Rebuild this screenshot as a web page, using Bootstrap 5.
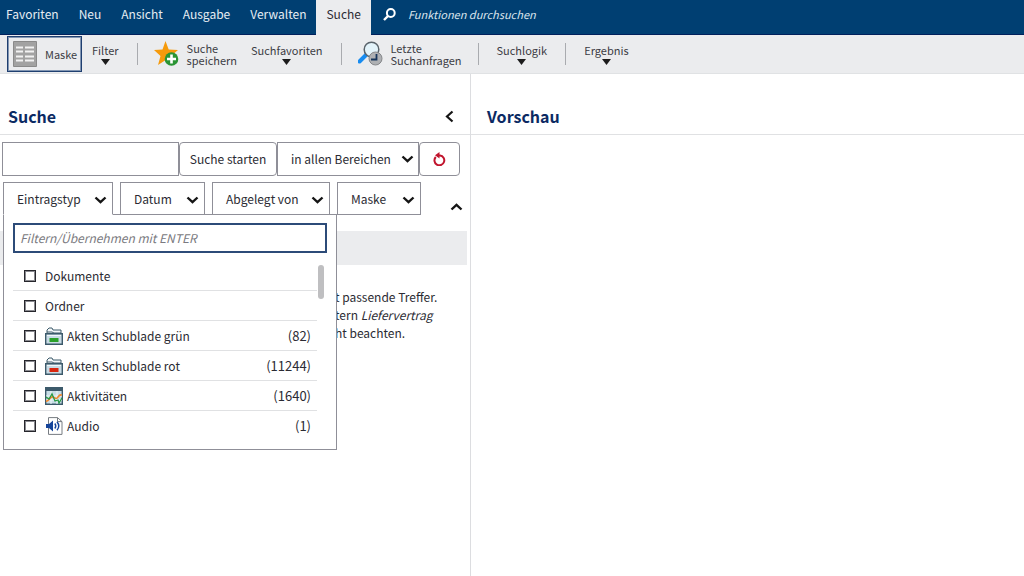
<!DOCTYPE html>
<html lang="de">
<head>
<meta charset="utf-8">
<meta name="viewport" content="width=device-width, initial-scale=1">
<title>Suche</title>
<link rel="stylesheet" href="https://cdn.jsdelivr.net/npm/bootstrap@5.3.0/dist/css/bootstrap.min.css">
<style>
  :root { --navy: #003f72; --ink: #2b2b33; --edge: #8f8f98; --panel: #ebecee; --title: #0b2a63; }
  body { font-family: "Noto Sans CJK SC", "Noto Sans", sans-serif; font-size: 12px; line-height: 18px; color: var(--ink); background: #fff; }
  .topbar { background: var(--navy); height: 35px; border-bottom: 1px solid #00205c; }
  .topbar .nav-link { color: #e6edf3; padding: 5px 10px; height: 35px; }
  .topbar .nav-link.active { color: var(--ink); background: var(--panel); }
  .topbar .nav-item:first-child .nav-link { padding-left: 6px; }
  .topbar label { margin-left: 12px; }
  .cmd-search { background: none; border: 0; color: #fff; font-size: 11px; font-style: italic; padding: 0; width: 200px; height: 28px; outline: 0; }
  .cmd-search::placeholder { color: #dbe5ee; }
  .ribbon { background: var(--panel); height: 39px; border-bottom: 1px solid #e0e2e4; }
  .tool { background: none; border: 0; padding: 0; color: #3c3c44; font-size: 11px; line-height: 12px; text-align: left; white-space: nowrap; }
  .tool-drop { display: flex; flex-direction: column; align-items: center; gap: 3px; padding: 0 2px; }
  .tool-active { border: 1px solid #1f3f70; outline: 1px solid #8296b3; outline-offset: -2px; width: 75px; height: 36px; padding: 0 5px; margin-left: 7px; }
  .tool-fav { margin-left: 12px; }
  .rule { width: 1px; height: 22px; background: #a9abaf; }
  .search-col { flex: 0 0 46%; border-right: 1px solid #dcdde0; }
  .pane-head { height: 61px; border-bottom: 1px solid #e0e1e3; padding-top: 24px; }
  .pane-head h2 { font-size: 16px; line-height: 36px; font-weight: 700; color: var(--title); margin: 0; }
  .bare { background: none; border: 0; padding: 0; line-height: 0; }
  .box { border: 1px solid var(--edge); background-color: #fff; color: var(--ink); height: 34px; font-size: 12px; line-height: 18px; white-space: nowrap; }
  .box:focus { outline: 0; }
  .search-form { padding: 7px 0 0 2px; }
  input.box { width: 177px; padding: 0 8px; }
  select.box { appearance: none; width: 142px; padding: 0 13px; background-repeat: no-repeat; background-position: right 4px center;
    background-image: url("data:image/svg+xml,%3Csvg xmlns='http://www.w3.org/2000/svg' width='13' height='8'%3E%3Cpath d='M1.500 1.500 6.500 6.200 11.500 1.500' fill='none' stroke='%23151515' stroke-width='2.400'/%3E%3C/svg%3E"); }
  .start { width: 98px; padding: 0; border-radius: 4px; }
  .reset { width: 41px; padding: 0; border-radius: 4px; }
  .filters { gap: 7px; padding: 6px 7px 0 3px; }
  .filter-box { height: 33px; padding: 0 5px 0 13px; display: flex; align-items: center; justify-content: space-between; }
  .filter-box svg { margin-top: 3px; }
  .filter-open { border-bottom-color: #fff; position: relative; z-index: 6; }
  .w-a { width: 110px; } .w-b { width: 85px; } .w-c { width: 118px; } .w-d { width: 84px; }
  .type-menu { position: absolute; top: 100%; left: 3px; margin-top: -1px; width: 334px; z-index: 5; background: #fff; border: 1px solid var(--edge); padding: 8px 9px; }
  .type-filter { width: 100%; height: 30px; border: 2px solid #2c4b78; padding: 0 5px 2px; font-size: 12px; font-style: italic; outline: 0; }
  .type-filter::placeholder { color: #7a7a80; }
  .type-list { width: 304px; margin-top: 8px; }
  .type-list li { height: 30px; border-bottom: 1px solid #e0e1e3; padding: 0 6px 0 11px; gap: 9px; }
  .type-list li:last-child { border-bottom: 0; }
  .type-list input { appearance: none; width: 12px; height: 12px; border: 1px solid #26262c; outline: 1px solid #8a8a90; outline-offset: -2px; margin: 0; }
  .type-list label { display: flex; align-items: center; gap: 4px; }
  .type-list svg { width: 18px; height: 18px; }
  .count { font-size: 13px; }
  .thumb { width: 6px; height: 34px; border-radius: 3px; background: #bfbfc1; margin: 12px 3px 0 0; }
  .result-bar { height: 34px; background: var(--panel); margin: 16px 3px 0 0; }
  .hint { padding: 23px 8px 0 335px; white-space: nowrap; }
</style>
</head>
<body class="min-vh-100 d-flex flex-column">
<svg width="0" height="0" class="position-absolute" aria-hidden="true">
  <symbol id="down" viewBox="0 0 13 8"><path d="M1.500 1.500 6.500 6.200 11.500 1.500" fill="none" stroke="#151515" stroke-width="2.400"/></symbol>
  <symbol id="tri" viewBox="0 0 9 6"><path d="M0 0H9L4.500 6Z" fill="#1c1c1c"/></symbol>
  <symbol id="cabinet" viewBox="0 0 18 18">
    <path d="M2 8V3l2-2h3l1 2h8v5" fill="#f5f8f9" stroke="#3c5a6b"/>
    <path d="M2 5h5l2 1h7" fill="none" stroke="#3c5a6b"/>
    <path d="M.7 6.700h16.600v10.600H.7z" fill="#c8dbe5" stroke="#3c5a6b" stroke-width="1.400"/>
    <path d="M2 8.500h14" stroke="#f2f8fa"/>
    <path d="M4.500 11h9v4h-9z" fill="currentColor"/>
  </symbol>
</svg>

<header>
  <nav class="topbar d-flex align-items-start" aria-label="Hauptmenü">
    <ul class="nav flex-nowrap">
      <li class="nav-item"><a class="nav-link" href="#">Favoriten</a></li>
      <li class="nav-item"><a class="nav-link" href="#">Neu</a></li>
      <li class="nav-item"><a class="nav-link" href="#">Ansicht</a></li>
      <li class="nav-item"><a class="nav-link" href="#">Ausgabe</a></li>
      <li class="nav-item"><a class="nav-link" href="#">Verwalten</a></li>
      <li class="nav-item"><a class="nav-link active" href="#" aria-current="page">Suche</a></li>
    </ul>
    <label class="d-flex align-items-center">
      <svg width="13" height="13" viewBox="0 0 13 13" class="me-2" aria-hidden="true"><circle cx="7.800" cy="5" r="3.900" fill="none" stroke="#fff" stroke-width="2"/><path d="M5 8 1 12" stroke="#fff" stroke-width="2.400"/></svg>
      <input class="cmd-search ms-1" type="text" placeholder="Funktionen durchsuchen" aria-label="Funktionen durchsuchen">
    </label>
  </nav>
  <div class="ribbon d-flex align-items-center" role="toolbar" aria-label="Suche">
    <button class="tool tool-active d-flex align-items-center gap-2" type="button">
      <svg width="24" height="26" viewBox="0 0 24 26" class="flex-shrink-0" aria-hidden="true"><path d="M.5.5h23v25H.5z" fill="#a2a2a2" stroke="#8a8a8a"/><path d="M3 6.500h7M12 6.500h9M3 10.500h7M12 10.500h9M3 15.500h7M12 15.500h9M3 19.500h7M12 19.500h9" stroke="#f2f2f2" stroke-width="2"/></svg>
      Maske</button>
    <button class="tool tool-drop ms-2" type="button">Filter<svg width="9" height="6"><use href="#tri"/></svg></button>
    <span class="rule mx-3"></span>
    <button class="tool d-flex align-items-center gap-2" type="button">
      <svg width="25" height="26" viewBox="0 0 25 26" aria-hidden="true"><path d="M11.500 0 14.700 8.500 24 9 17 15l2.500 9-7.800-5-7.700 5 2.500-9L0 9l8.500-.5z" fill="#f59a0c"/><circle cx="17.500" cy="18" r="6.800" fill="#2a9434"/><path d="M17.500 13.500v9M13 18h9" stroke="#fff" stroke-width="2.600"/></svg>
      <span>Suche<br>speichern</span></button>
    <button class="tool tool-drop tool-fav" type="button">Suchfavoriten<svg width="9" height="6"><use href="#tri"/></svg></button>
    <span class="rule mx-3"></span>
    <button class="tool d-flex align-items-center gap-2" type="button">
      <svg width="25" height="26" viewBox="0 0 25 26" aria-hidden="true"><path d="m9 13-7.500 7.500" stroke="#188cf0" stroke-width="4" stroke-linecap="round"/><circle cx="13.500" cy="8.500" r="7.300" fill="#e3f3fa" stroke="#59636b" stroke-width="1.500"/><circle cx="17.500" cy="17.500" r="6.500" fill="#aeb0b3" stroke="#85878a"/><path d="M18.500 13v5.500H13" fill="none" stroke="#17365c" stroke-width="1.800"/></svg>
      <span>Letzte<br>Suchanfragen</span></button>
    <span class="rule mx-3"></span>
    <button class="tool tool-drop" type="button">Suchlogik<svg width="9" height="6"><use href="#tri"/></svg></button>
    <span class="rule mx-3"></span>
    <button class="tool tool-drop" type="button">Ergebnis<svg width="9" height="6"><use href="#tri"/></svg></button>
  </div>
</header>

<main class="d-flex flex-grow-1">
  <section class="search-col">
    <div class="pane-head d-flex justify-content-between ps-2 pe-3">
      <h2>Suche</h2>
      <button class="bare" type="button" aria-label="Einklappen"><svg width="9" height="13" viewBox="0 0 9 13"><path d="M7.500 1.500 2 6.500l5.500 5" fill="none" stroke="#151515" stroke-width="2.200"/></svg></button>
    </div>
    <form class="search-form d-flex">
      <input class="box" type="text" aria-label="Suchbegriff">
      <button class="box start" type="button">Suche starten</button>
      <select class="box" aria-label="Bereich"><option>in allen Bereichen</option></select>
      <button class="box reset" type="button" aria-label="Zurücksetzen"><svg class="d-block mx-auto" width="14" height="14" viewBox="0 0 14 14"><path d="M2.800 5A4.900 4.900 0 1 0 7 3.500H4" fill="none" stroke="#c1142d" stroke-width="2"/><path d="M6.500 0v6.500L2 3.300z" fill="#c1142d"/></svg></button>
    </form>
    <div class="filters position-relative d-flex">
      <button class="box filter-box filter-open w-a" type="button" aria-expanded="true">Eintragstyp<svg width="13" height="8"><use href="#down"/></svg></button>
      <button class="box filter-box w-b" type="button">Datum<svg width="13" height="8"><use href="#down"/></svg></button>
      <button class="box filter-box w-c" type="button">Abgelegt von<svg width="13" height="8"><use href="#down"/></svg></button>
      <button class="box filter-box w-d" type="button">Maske<svg width="13" height="8"><use href="#down"/></svg></button>
      <button class="bare ms-auto" type="button" aria-label="Filter ausblenden"><svg width="13" height="8" viewBox="0 0 13 8" class="mt-3"><path d="M1.500 6.500 6.500 1.800 11.500 6.500" fill="none" stroke="#151515" stroke-width="2.400"/></svg></button>
      <div class="type-menu">
        <input class="type-filter d-block" type="text" placeholder="Filtern/Übernehmen mit ENTER" aria-label="Filtern">
        <div class="d-flex justify-content-between">
          <ul class="type-list list-unstyled mb-0">
            <li class="d-flex align-items-center"><input type="checkbox" id="t1"><label for="t1">Dokumente</label></li>
            <li class="d-flex align-items-center"><input type="checkbox" id="t2"><label for="t2">Ordner</label></li>
            <li class="d-flex align-items-center"><input type="checkbox" id="t3"><label for="t3"><svg color="#2aa02a"><use href="#cabinet"/></svg>Akten Schublade grün</label><span class="count ms-auto">(82)</span></li>
            <li class="d-flex align-items-center"><input type="checkbox" id="t4"><label for="t4"><svg color="#d8260f"><use href="#cabinet"/></svg>Akten Schublade rot</label><span class="count ms-auto">(11244)</span></li>
            <li class="d-flex align-items-center"><input type="checkbox" id="t5"><label for="t5"><svg viewBox="0 0 18 18"><path d="M.7.7h16.600v16.600H.7z" fill="#c8dde6" stroke="#3c5a6b" stroke-width="1.400"/><path d="M1 2.500h16" stroke="#3c5a6b" stroke-width="3"/><path d="M6 4v13M12 4v13M1 9h16M1 13h16" stroke="#edf5f8"/><path d="M1 14c3 1 4-5 7-4s3 3 5 0 3-2 4-2" fill="none" stroke="#f0862a" stroke-width="1.600"/><path d="m1 10 3 2 3-5 3 7 3-1 1 3 3-5" fill="none" stroke="#279a45" stroke-width="1.300"/></svg>Aktivitäten</label><span class="count ms-auto">(1640)</span></li>
            <li class="d-flex align-items-center"><input type="checkbox" id="t6"><label for="t6"><svg viewBox="0 0 18 18"><path d="M3.500.6h9l4.500 4v12.800H3.500z" fill="#fff" stroke="#777c82"/><path d="M12.500.6v4H17" fill="none" stroke="#777c82"/><path d="M1 7h3l4-3.500v11L4 11H1z" fill="#15449a"/><path d="M9.800 6.500q2 2.500 0 5M12 4.800q3.500 4.200 0 8.400" fill="none" stroke="#15449a" stroke-width="1.400"/></svg>Audio</label><span class="count ms-auto">(1)</span></li>
          </ul>
          <div class="thumb"></div>
        </div>
      </div>
    </div>
    <div class="result-bar"></div>
    <p class="hint mb-0">t passende Treffer.<br>tern <em>Liefervertrag</em><br>ht beachten.</p>
  </section>
  <section class="flex-grow-1">
    <div class="pane-head ps-3"><h2>Vorschau</h2></div>
  </section>
</main>
<script src="https://cdn.jsdelivr.net/npm/bootstrap@5.3.0/dist/js/bootstrap.bundle.min.js"></script>
</body>
</html>
